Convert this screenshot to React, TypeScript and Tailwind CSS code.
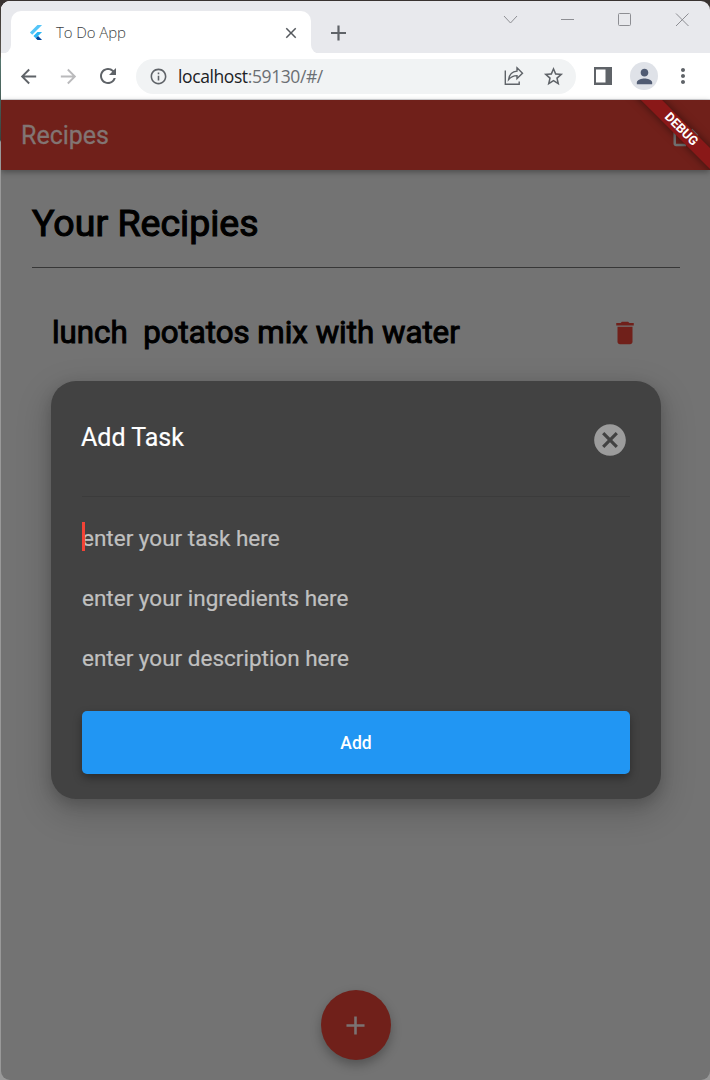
import React from "react";
import {
  MdArrowBack,
  MdArrowForward,
  MdClose,
  MdRefresh,
  MdOutlineInfo,
  MdStarBorder,
  MdPerson,
  MdMoreVert,
  MdDelete,
  MdCancel,
  MdAdd,
  MdLogout,
} from "react-icons/md";

function FlutterLogo() {
  return (
    <svg className="ml-[17px] h-[15px] w-[16px] shrink-0" viewBox="0 0 24 24">
      <path d="M14.3 0L2.3 12l3.7 3.7L21.7 0z" fill="#54c5f8" />
      <path d="M14.3 11.1L7.9 17.5l3.7 3.7 10.1-10.1z" fill="#29b6f6" />
      <path d="M11.6 21.2l3.700-3.700 6.400 6.500h-7.400z" fill="#01459b" />
    </svg>
  );
}

function TabStrip() {
  return (
    <header className="flex h-[53px] shrink-0 items-start justify-between bg-[#e8e9ed]">
      <div className="flex items-end">
        <div className="h-[53px] w-[10px] bg-white">
          <div className="h-full w-full rounded-br-[9px] bg-[#e8e9ed]" />
        </div>
        <div className="mt-[10px] flex h-[43px] w-[300px] items-center rounded-t-[10px] bg-white">
          <FlutterLogo />
          <span className="ml-[12px] grow text-[15px] font-light tracking-[-0.1px] text-[#3c3f43]">To Do App</span>
          <MdClose className="mr-[11px] h-[18px] w-[18px] text-[#55595e]" />
        </div>
        <div className="h-[53px] w-[10px] bg-white">
          <div className="h-full w-full rounded-bl-[9px] bg-[#e8e9ed]" />
        </div>
        <div className="mb-[11px] ml-[5px]">
          <svg className="h-[20px] w-[24px]" viewBox="0 0 24 20" stroke="#5f6368" strokeWidth="2.2">
            <path d="M12.5 2.5v15M5 10h15" />
          </svg>
        </div>
      </div>
      <svg className="mt-[9px] h-[20px] w-[210px]" viewBox="0 0 210 20" fill="none" stroke="#8d8e93" strokeWidth="1">
        <path d="M4 6l6.500 7 6.500-7" />
        <path d="M61 9.500h13" />
        <rect x="118.500" y="3.500" width="12" height="12" rx="1" />
        <path d="M176 3.500l12.500 12.500M188.500 3.500L176 16" />
      </svg>
    </header>
  );
}

function ShareIcon() {
  return (
    <svg className="h-[20px] w-[20px]" viewBox="0 0 20 20" fill="none" stroke="#5f6368" strokeWidth="1.4">
      <path d="M1.300 4.500v13.700h13.900v-2.700" />
      <path d="M13 1.800l5.500 5.400-5.500 5.400v-3C9.500 9.600 7 10.800 4.600 13.600c.6-5 3.700-8 8.400-8.500z" />
    </svg>
  );
}

function Toolbar() {
  return (
    <div className="flex h-[47px] shrink-0 items-center border-b border-[#d8d9dc] bg-white text-[#5f6368]">
      <MdArrowBack className="ml-[16px] h-[23px] w-[23px]" />
      <MdArrowForward className="ml-[17px] h-[23px] w-[23px] text-[#bababc]" />
      <MdRefresh className="ml-[16px] h-[24px] w-[24px]" />
      <div className="ml-[16px] flex h-[35px] w-[440px] items-center rounded-full bg-[#f1f3f4]">
        <MdOutlineInfo className="ml-[13px] h-[19px] w-[19px]" />
        <span className="ml-[10px] grow text-[17.5px] tracking-[-0.4px] text-[#6b6f73]">
          <span className="text-[#202124]">localhost</span>:59130/#/
        </span>
        <ShareIcon />
        <MdStarBorder className="mr-[11px] ml-[18px] h-[23px] w-[23px]" />
      </div>
      <svg className="ml-[18px] h-[18px] w-[18px]" viewBox="0 0 18 18">
        <path fill="#5f6368" d="M0 0h18v18H0z" />
        <path fill="#fff" d="M2 2.500h9.500v13H2z" />
      </svg>
      <div className="ml-[18px] flex h-[28px] w-[28px] items-center justify-center rounded-full bg-[#dfe2e8]">
        <MdPerson className="h-[23px] w-[23px] text-[#515c73]" />
      </div>
      <MdMoreVert className="ml-[13px] h-[24px] w-[24px]" />
    </div>
  );
}

function DebugBanner() {
  return (
    <div className="absolute top-0 right-0 z-20 h-[70px] w-[110px] overflow-hidden">
      <div className="absolute top-[22px] left-[6px] flex h-[15px] w-[150px] rotate-45 items-center justify-center bg-[#8a1818] text-[12.800px] leading-none font-bold text-white shadow-[0_0_8px_rgba(0,0,0,0.5)]">
        DEBUG
      </div>
    </div>
  );
}

function AppBar() {
  return (
    <div className="relative z-10 flex h-[70px] shrink-0 items-center justify-between bg-[#70201a] shadow-[0_2px_6px_rgba(0,0,0,0.35)]">
      <h1 className="ml-[20px] pt-px text-[25px] text-[#827573] [-webkit-text-stroke:0.300px_#827573]">Recipes</h1>
      <MdLogout className="mr-[9px] h-[30px] w-[30px] text-[#737373]" />
    </div>
  );
}

const fields = ["enter your task here", "enter your ingredients here", "enter your description here"];

function TaskDialog() {
  return (
    <section className="absolute top-[381px] left-[51px] flex h-[418px] w-[610px] flex-col rounded-[25px] bg-[#424242] px-[31px] shadow-[0_12px_32px_4px_rgba(0,0,0,0.17),0_5px_14px_rgba(0,0,0,0.16)]">
      <div className="flex h-[116px] shrink-0 items-center justify-between border-b border-[#3b3b3b]">
        <h2 className="-mt-px -ml-px text-[25px] text-white [-webkit-text-stroke:0.200px_white]">Add Task</h2>
        <MdCancel className="mt-[2px] mr-[1px] h-[38px] w-[38px] text-[#9c9c9c]" />
      </div>
      <div className="mt-[12px] flex flex-col">
        {fields.map((label, index) => (
          <div key={label} className="relative flex h-[60px] items-center text-[22.500px] text-[#c0c0c0] [-webkit-text-stroke:0.200px_#c0c0c0]">
            {index === 0 && <span className="absolute top-[13px] left-0 h-[29px] w-[3px] bg-[#f44336]" />}
            {label}
          </div>
        ))}
      </div>
      <button className="mt-[22px] h-[63px] w-full rounded-[5px] bg-[#2196f3] pt-px text-[17.500px] font-medium text-white shadow-[0_4px_8px_rgba(0,0,0,0.35)]">
        Add
      </button>
    </section>
  );
}

export default function App() {
  return (
    <div className="relative flex h-[1080px] w-[710px] flex-col overflow-hidden bg-[linear-gradient(#393331_0,#5b5750_56px,#56776f_60px,#384440_140px,#999_142px,#999_100%)] pl-px font-['Open_Sans',sans-serif]">
      <div className="flex h-full flex-col overflow-hidden rounded-b-[9px] bg-[#737373]">
        <div className="h-px shrink-0 bg-[#393331]" />
        <div className="-mt-px flex flex-col bg-[#393331] pt-px">
          <div className="-mb-px overflow-hidden rounded-t-[9px]">
            <TabStrip />
          </div>
        </div>
        <Toolbar />
        <main className="relative flex grow flex-col font-[Roboto,sans-serif]">
          <AppBar />
          <DebugBanner />
          <div className="ml-[31px] flex h-[98px] w-[648px] items-center border-b border-[#373737] pt-[9px] text-[37.500px] text-black [-webkit-text-stroke:1.100px_black]">
            Your Recipies
          </div>
          <div className="mt-[34px] ml-[51px] flex h-[62px] w-[588px] items-center justify-between">
            <span className="text-[31.250px] whitespace-pre text-black [-webkit-text-stroke:1px_black]">
              {"lunch  potatos mix with water"}
            </span>
            <MdDelete className="h-[30px] w-[30px] text-[#70201a]" />
          </div>
          <button className="mx-auto mt-auto mb-[20px] flex h-[70px] w-[70px] items-center justify-center rounded-full bg-[#70201a] shadow-[0_5px_11px_rgba(0,0,0,0.28)]">
            <MdAdd className="h-[31px] w-[31px] text-[#7b7373]" />
          </button>
        </main>
      </div>
      <div className="font-[Roboto,sans-serif]">
        <TaskDialog />
      </div>
    </div>
  );
}
